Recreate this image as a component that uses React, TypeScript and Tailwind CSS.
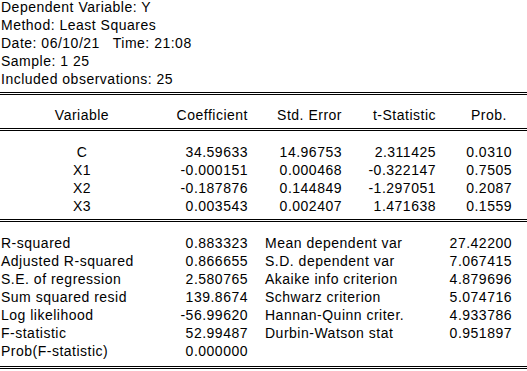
const info = [
  "Dependent Variable: Y",
  "Method: Least Squares",
  "Date: 06/10/21   Time: 21:08",
  "Sample: 1 25",
  "Included observations: 25",
];

const coefs = [
  ["C", "34.59633", "14.96753", "2.311425", "0.0310"],
  ["X1", "-0.000151", "0.000468", "-0.322147", "0.7505"],
  ["X2", "-0.187876", "0.144849", "-1.297051", "0.2087"],
  ["X3", "0.003543", "0.002407", "1.471638", "0.1559"],
];

const stats = [
  ["R-squared", "0.883323", "Mean dependent var", "27.42200"],
  ["Adjusted R-squared", "0.866655", "S.D. dependent var", "7.067415"],
  ["S.E. of regression", "2.580765", "Akaike info criterion", "4.879696"],
  ["Sum squared resid", "139.8674", "Schwarz criterion", "5.074716"],
  ["Log likelihood", "-56.99620", "Hannan-Quinn criter.", "4.933786"],
  ["F-statistic", "52.99487", "Durbin-Watson stat", "0.951897"],
  ["Prob(F-statistic)", "0.000000", "", ""],
];

const DoubleRule = ({ className = "" }: { className?: string }) => (
  <div className={`h-[3px] w-full border-y border-black ${className}`} />
);

const App = () => {
  return (
    <div className="w-[527px] h-[371px] overflow-hidden bg-white text-black font-['Liberation_Sans',Arial,sans-serif] text-[14px] leading-[18px] tracking-[0.5px]">
      <div className="-mt-[2px] pl-[1px]">
        {info.map((line) => (
          <div key={line} className="whitespace-pre">
            {line}
          </div>
        ))}
      </div>

      <DoubleRule className="mt-[4px]" />

      <div className="mt-[11px] grid grid-cols-[164px_84px_94px_94px_76px] text-right">
        <div className="text-center">Variable</div>
        <div>Coefficient</div>
        <div>Std. Error</div>
        <div>t-Statistic</div>
        <div className="pr-[5px]">Prob.</div>
      </div>

      <DoubleRule className="mt-[4px]" />

      <div className="mt-[12px]">
        {coefs.map((row) => (
          <div
            key={row[0]}
            className="grid grid-cols-[164px_84px_94px_94px_76px] text-right"
          >
            <div className="text-center">{row[0]}</div>
            <div>{row[1]}</div>
            <div>{row[2]}</div>
            <div>{row[3]}</div>
            <div>{row[4]}</div>
          </div>
        ))}
      </div>

      <DoubleRule className="mt-[4px]" />

      <div className="mt-[12px]">
        {stats.map((row) => (
          <div key={row[0]} className="grid grid-cols-[248px_264px]">
            <div className="flex justify-between pl-[1px]">
              <span>{row[0]}</span>
              <span>{row[1]}</span>
            </div>
            <div className="flex justify-between pl-[17px]">
              <span>{row[2]}</span>
              <span>{row[3]}</span>
            </div>
          </div>
        ))}
      </div>

      <DoubleRule className="mt-[6px]" />
    </div>
  );
};

export default App;
